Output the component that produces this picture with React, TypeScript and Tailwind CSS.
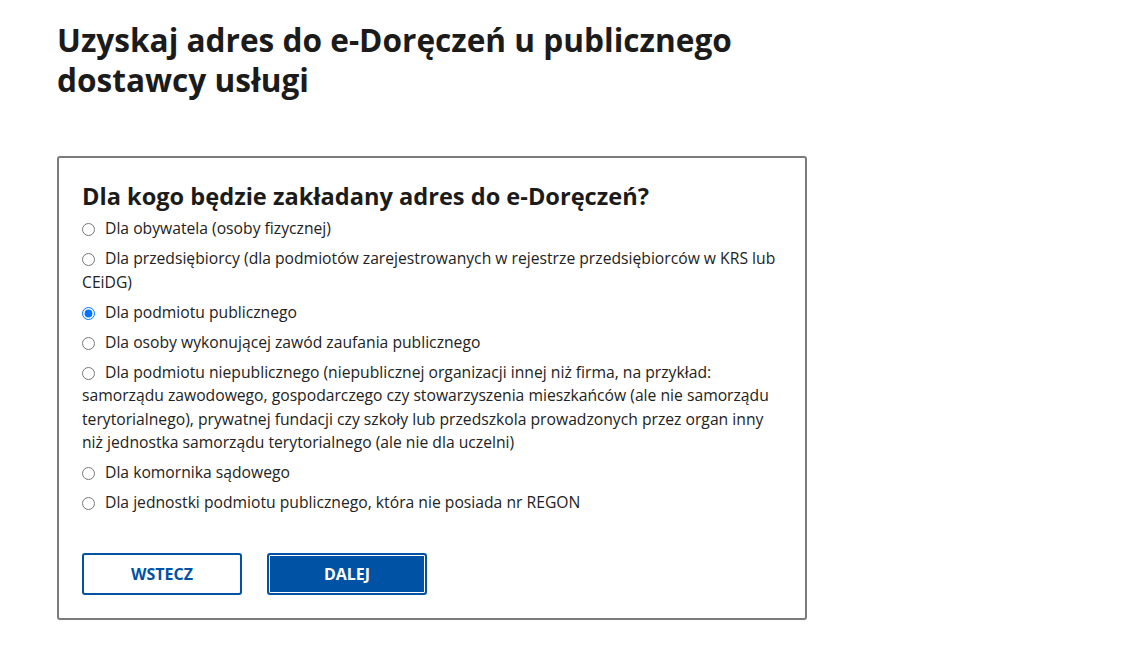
import { useState } from "react";

const OPTIONS = [
  { id: "obywatel", label: "Dla obywatela (osoby fizycznej)" },
  {
    id: "przedsiebiorca",
    label:
      "Dla przedsiębiorcy (dla podmiotów zarejestrowanych w rejestrze przedsiębiorców w KRS lub CEiDG)",
  },
  { id: "publiczny", label: "Dla podmiotu publicznego" },
  { id: "zaufanie", label: "Dla osoby wykonującej zawód zaufania publicznego" },
  {
    id: "niepubliczny",
    label:
      "Dla podmiotu niepublicznego (niepublicznej organizacji innej niż firma, na przykład: samorządu zawodowego, gospodarczego czy stowarzyszenia mieszkańców (ale nie samorządu terytorialnego), prywatnej fundacji czy szkoły lub przedszkola prowadzonych przez organ inny niż jednostka samorządu terytorialnego (ale nie dla uczelni)",
  },
  { id: "komornik", label: "Dla komornika sądowego" },
  {
    id: "jednostka",
    label: "Dla jednostki podmiotu publicznego, która nie posiada nr REGON",
  },
];

export default function App() {
  const [selected, setSelected] = useState("publiczny");

  return (
    <div className="min-h-screen bg-white pl-[57px] pt-5 font-['Open_Sans',sans-serif] text-[#1b1b1b]">
      <h1 className="w-[720px] text-[31.6px] font-bold leading-[40px]">
        Uzyskaj adres do e-Doręczeń u publicznego dostawcy usługi
      </h1>

      <form
        className="mt-14 w-[750px] rounded-[3px] border-2 border-[#7b7b7b] px-[23px] pb-[23px] pt-[22px]"
        onSubmit={e => e.preventDefault()}
      >
        <fieldset>
          <legend className="text-[23.6px] font-bold leading-8">
            Dla kogo będzie zakładany adres do e-Doręczeń?
          </legend>

          <div className="mt-[5px] flex flex-col gap-[6.5px]">
            {OPTIONS.map(o => (
              <label
                key={o.id}
                className="block text-[15.7px] leading-[1.5] text-[#222]"
              >
                <input
                  type="radio"
                  name="odbiorca"
                  value={o.id}
                  checked={selected === o.id}
                  onChange={() => setSelected(o.id)}
                  className="relative top-[1px] mr-[10px] ml-0 h-[13px] w-[13px] align-[-1px]"
                />
                {o.label}
              </label>
            ))}
          </div>
        </fieldset>

        <div className="mt-[38px] flex gap-[25px]">
          <button
            type="button"
            className="h-[42px] w-[160px] rounded-[3px] border-2 border-[#0052a5] bg-white text-[16px] font-bold text-[#0052a5]"
          >
            WSTECZ
          </button>
          <button
            type="submit"
            className="h-[42px] w-[160px] rounded-[3px] border-2 border-[#0052a5] bg-[#0052a5] text-[16px] font-bold text-white shadow-[inset_0_0_0_1px_#fff]"
          >
            DALEJ
          </button>
        </div>
      </form>
    </div>
  );
}
